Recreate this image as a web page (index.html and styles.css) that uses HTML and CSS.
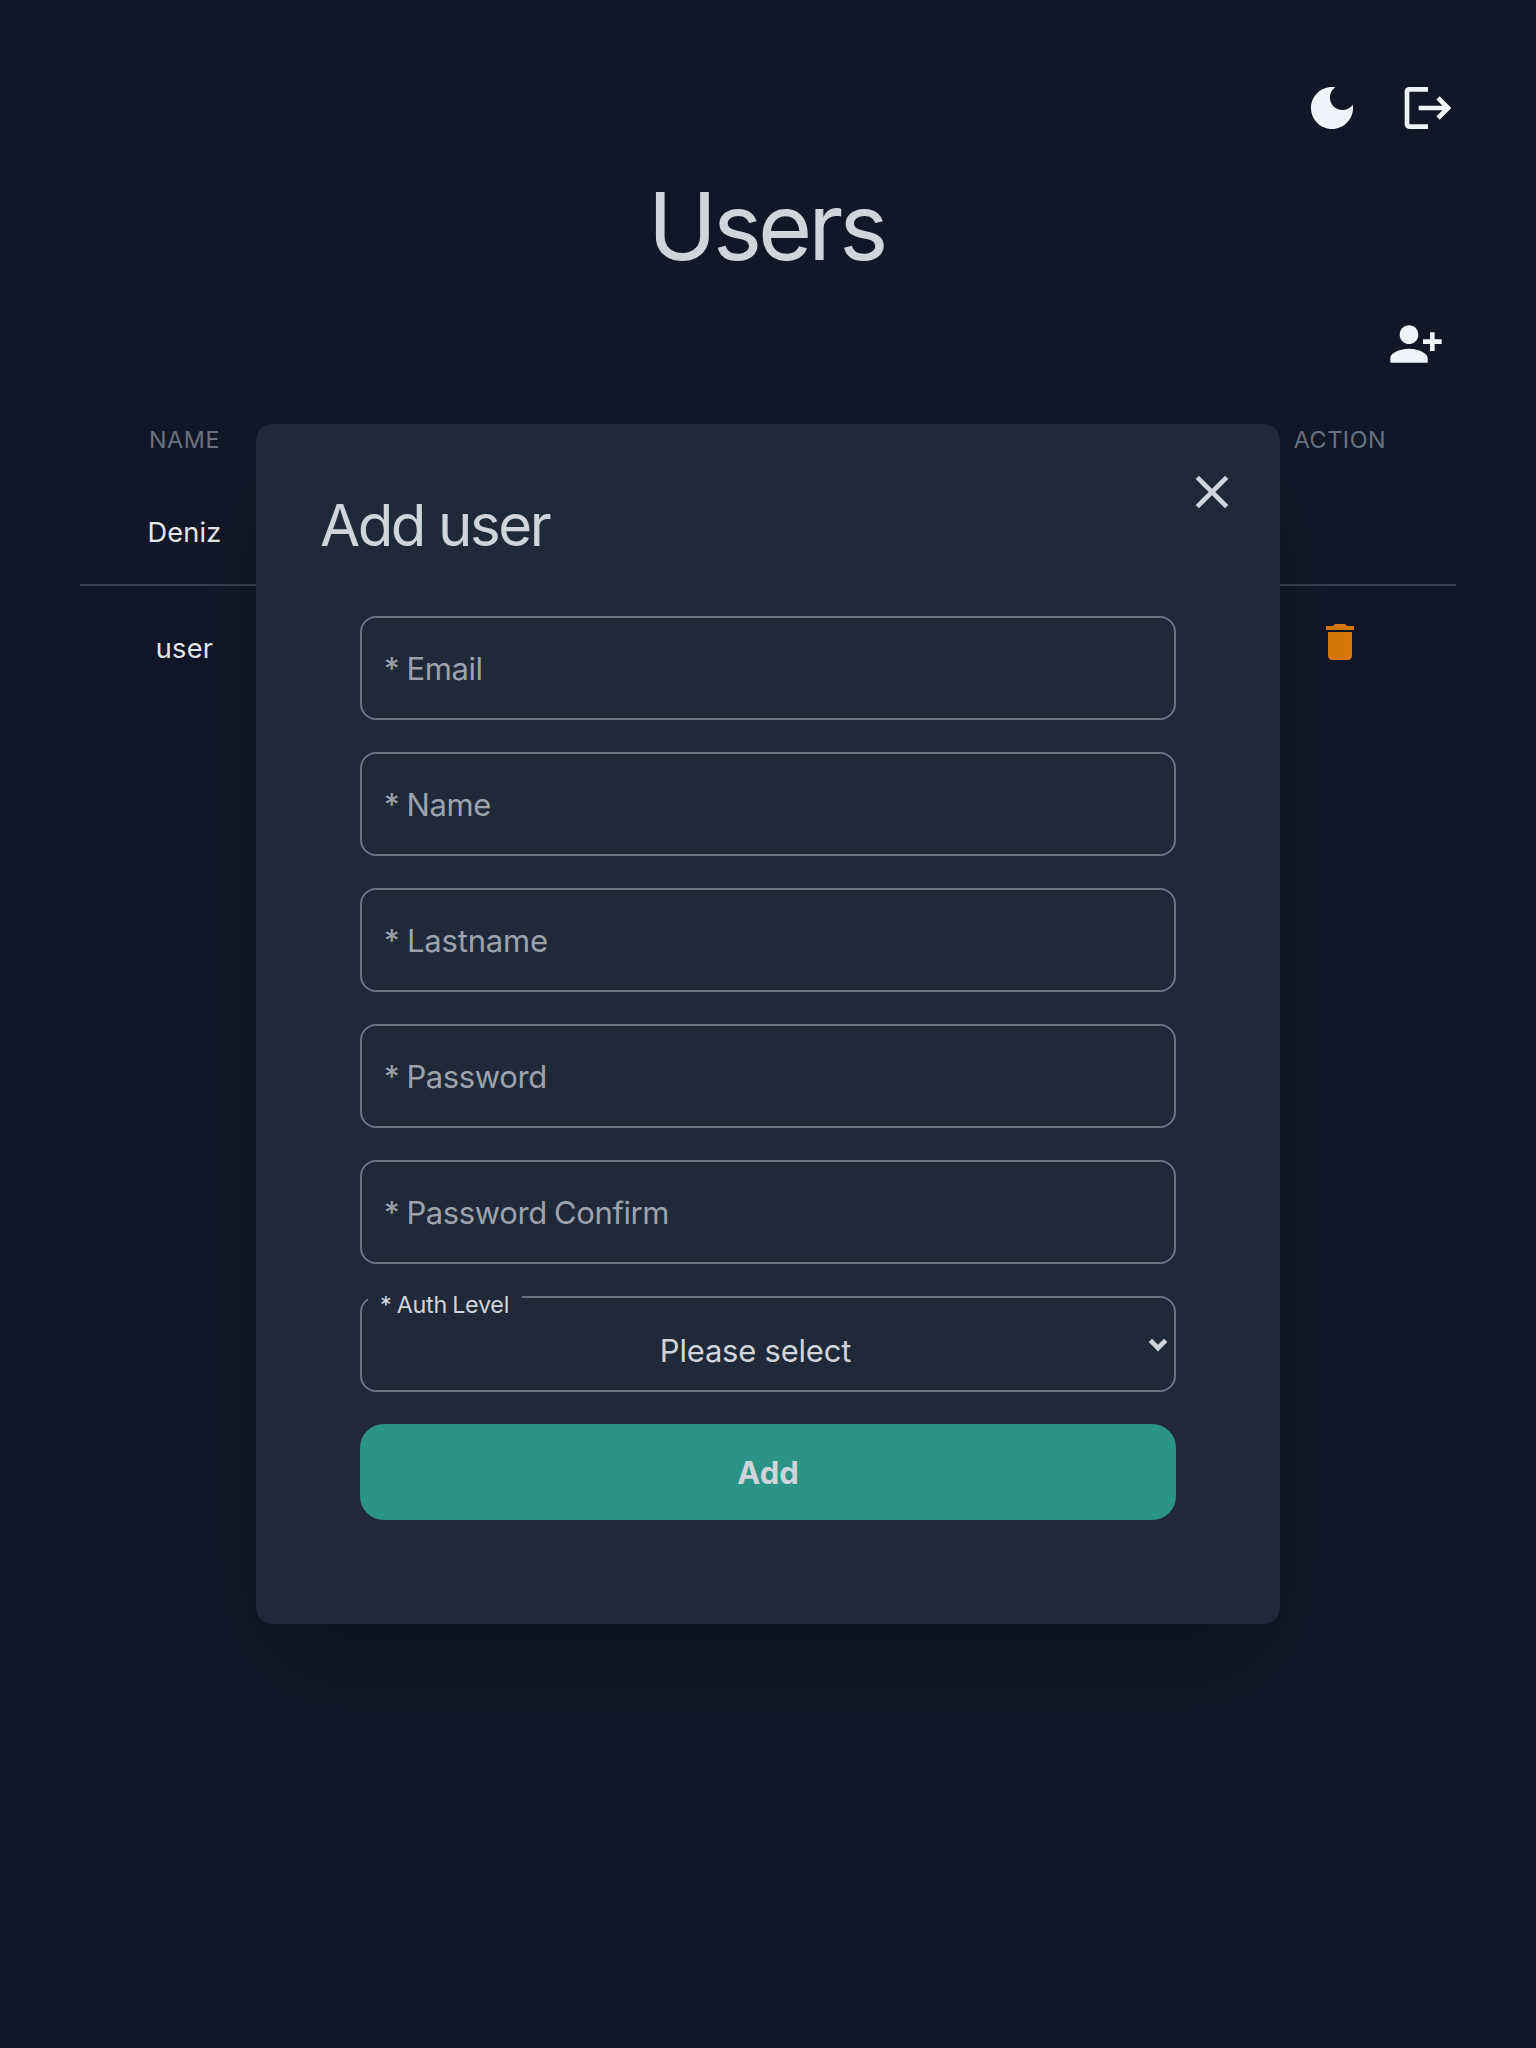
FILE: index.html
```html
<!DOCTYPE html>
<html lang="en">
<head>
  <meta charset="utf-8">
  <title>Users</title>
  <link rel="stylesheet" href="styles.css">
</head>
<body>
  <main class="page">
    <header class="toolbar">
      <svg class="icon" viewBox="0 0 24 24"><path d="M12 3c-4.97 0-9 4.03-9 9s4.03 9 9 9 9-4.03 9-9c0-.46-.04-.92-.1-1.36-.98 1.37-2.58 2.26-4.4 2.26-2.98 0-5.4-2.42-5.4-5.4 0-1.81.89-3.42 2.26-4.4-.44-.06-.9-.1-1.36-.1z"/></svg>
      <svg class="icon" viewBox="0 0 24 24"><path d="M17 7l-1.41 1.41L18.17 11H8v2h10.17l-2.58 2.58L17 17l5-5zM4 5h8V3H4c-1.1 0-2 .9-2 2v14c0 1.1.9 2 2 2h8v-2H4V5z"/></svg>
    </header>
    <h1 class="title">Users</h1>
    <div class="actions">
      <svg class="icon" viewBox="0 0 24 24"><path d="M13 8c0-2.21-1.79-4-4-4S5 5.79 5 8s1.79 4 4 4 4-1.79 4-4zm2 2v2h3v3h2v-3h3v-2h-3V7h-2v3h-3zM1 18v2h16v-2c0-2.66-5.33-4-8-4s-8 1.34-8 4z"/></svg>
    </div>
    <section class="table">
      <div class="row head"><span>NAME</span><span></span><span>ACTION</span></div>
      <div class="row first"><span>Deniz</span><span></span><span></span></div>
      <div class="row last"><span>user</span><span></span><span class="cell-action"><svg class="trash" viewBox="0 0 24 24"><path d="M6 19c0 1.1.9 2 2 2h8c1.1 0 2-.9 2-2V7H6v12zM19 4h-3.5l-1-1h-5l-1 1H5v2h14V4z"/></svg></span></div>
    </section>
  </main>

  <div class="modal">
    <svg class="icon close" viewBox="0 0 24 24"><path d="M19 6.41L17.59 5 12 10.59 6.41 5 5 6.41 10.59 12 5 17.59 6.41 19 12 13.41 17.59 19 19 17.59 13.41 12z"/></svg>
    <h2 class="modal-title">Add user</h2>
    <form class="form">
      <input class="field" type="text" placeholder="* Email">
      <input class="field" type="text" placeholder="* Name">
      <input class="field lastname" type="text" placeholder="* Lastname">
      <input class="field" type="password" placeholder="* Password">
      <input class="field confirm" type="password" placeholder="* Password Confirm">
      <div class="select-wrap">
        <label class="select-label">* Auth Level</label>
        <select class="select"><option>Please select</option></select>
        <svg class="chevron" viewBox="0 0 20 14"><path d="M2.4 2.4L10 10.2l7.6-7.8" fill="none" stroke="currentColor" stroke-width="4.6"/></svg>
      </div>
      <button class="submit" type="button">Add</button>
    </form>
  </div>
</body>
</html>
```
FILE: styles.css
```css
* { box-sizing: border-box; }

body {
  margin: 0;
  min-height: 2048px;
  background: #111728;
  color: #d1d4dc;
  font-family: Inter, "Liberation Sans", sans-serif;
}

h1, h2 { margin: 0; font-weight: 400; }

.page { padding: 80px 80px 0; }

.icon { display: block; width: 56px; height: 56px; fill: #f0f4fa; }

.toolbar { display: flex; justify-content: flex-end; gap: 40px; }

.title {
  margin-top: 42px;
  padding-right: 4px;
  font-size: 93px;
  line-height: 96px;
  letter-spacing: -4px;
  text-align: center;
}

.actions {
  display: flex;
  justify-content: flex-end;
  margin-top: 42px;
  padding-right: 12px;
}

.table { margin-top: 28px; }

.row {
  display: grid;
  grid-template-columns: 209px 1fr 232px;
  align-items: center;
  justify-items: center;
  color: #e5e7eb;
  font-size: 27.2px;
  letter-spacing: 0.22px;
}

.head {
  height: 80px;
  padding-bottom: 2px;
  color: #6b7180;
  font-size: 23.3px;
  letter-spacing: 0.6px;
}

.first { height: 106px; border-bottom: 2px solid #374050; }
.last { height: 124px; }
.cell-action { padding-bottom: 12px; }
.trash { display: block; width: 48px; height: 48px; fill: #d8780a; }

.modal {
  position: absolute;
  top: 424px;
  left: 256px;
  width: 1024px;
  height: 1200px;
  padding: 69px 64px 0;
  border-radius: 16px;
  background: #1f293a;
  box-shadow: 0 50px 92px -24px rgba(0, 0, 0, 0.25);
}

.close {
  position: absolute;
  top: 40px;
  right: 40px;
  fill: #d1d4dc;
}

.modal-title {
  font-size: 58.2px;
  line-height: 64px;
  letter-spacing: -2.45px;
}

.form {
  display: flex;
  flex-direction: column;
  gap: 32px;
  margin-top: 59px;
  padding: 0 40px;
}

.field, .select {
  display: block;
  width: 100%;
  border: 2px solid #6b7280;
  border-radius: 16px;
  background: transparent;
  color: #d1d4dc;
  font-family: inherit;
  font-size: 31px;
  outline: none;
}

.field {
  height: 104px;
  padding: 1px 22px 0;
  letter-spacing: -0.4px;
  word-spacing: -1px;
}
.field::placeholder { color: #9ca2ae; opacity: 1; }
.lastname { letter-spacing: -0.17px; }

.select-wrap { position: relative; height: 96px; }

.select {
  height: 96px;
  padding: 13px 25px 0 0;
  appearance: none;
  letter-spacing: -0.22px;
  text-align: center;
  text-align-last: center;
}

.select-label {
  position: absolute;
  top: -8px;
  left: 8px;
  width: 154px;
  padding-left: 12px;
  background: #1f293a;
  font-size: 23.3px;
  line-height: 33px;
  letter-spacing: -0.26px;
  word-spacing: -1px;
}

.chevron {
  position: absolute;
  top: 42px;
  right: 8px;
  width: 20px;
  height: 14px;
  color: #d1d4dc;
}

.submit {
  height: 96px;
  padding: 0;
  border: 0;
  border-radius: 24px;
  background: #2c9486;
  color: #d1d4dc;
  font-family: inherit;
  font-size: 31px;
  font-weight: 700;
}
```
